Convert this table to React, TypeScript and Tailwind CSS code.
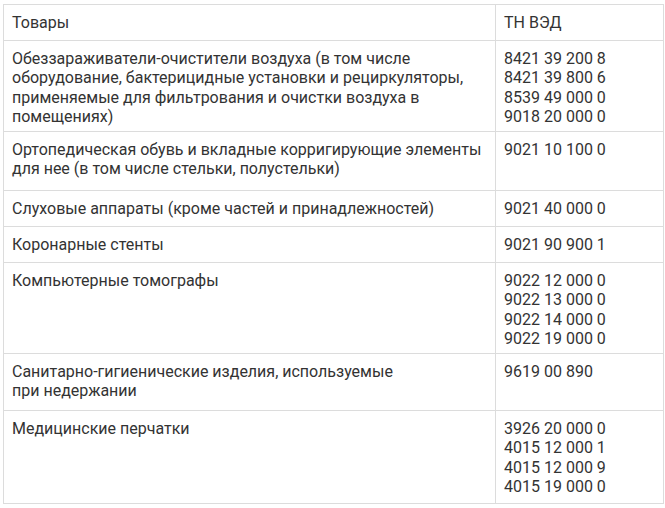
import React from "react";

type Row = { name: string[]; codes: string[]; h: string };

const rows: Row[] = [
  {
    name: [
      "Обеззараживатели-очистители воздуха (в том числе",
      "оборудование, бактерицидные установки и рециркуляторы,",
      "применяемые для фильтрования и очистки воздуха в",
      "помещениях)",
    ],
    codes: ["8421 39 200 8", "8421 39 800 6", "8539 49 000 0", "9018 20 000 0"],
    h: "h-[91px]",
  },
  {
    name: [
      "Ортопедическая обувь и вкладные корригирующие элементы",
      "для нее (в том числе стельки, полустельки)",
    ],
    codes: ["9021 10 100 0"],
    h: "h-[59px]",
  },
  {
    name: ["Слуховые аппараты (кроме частей и принадлежностей)"],
    codes: ["9021 40 000 0"],
    h: "h-[36px]",
  },
  {
    name: ["Коронарные стенты"],
    codes: ["9021 90 900 1"],
    h: "h-[36px]",
  },
  {
    name: ["Компьютерные томографы"],
    codes: ["9022 12 000 0", "9022 13 000 0", "9022 14 000 0", "9022 19 000 0"],
    h: "h-[91px]",
  },
  {
    name: ["Санитарно-гигиенические изделия, используемые", "при недержании"],
    codes: ["9619 00 890"],
    h: "h-[57px]",
  },
  {
    name: ["Медицинские перчатки"],
    codes: ["3926 20 000 0", "4015 12 000 1", "4015 12 000 9", "4015 19 000 0"],
    h: "h-[93px]",
  },
];

const Lines = ({ items }: { items: string[] }) => (
  <>
    {items.map((t, i) => (
      <div key={i} className="whitespace-nowrap">
        {t}
      </div>
    ))}
  </>
);

export default function App() {
  return (
    <div className="w-[665px] h-[508px] bg-white pt-[4px] pl-[3px] font-['Roboto',sans-serif] text-[16px] leading-[19.3px] text-[#333]">
      <table className="w-[660px] border-collapse table-fixed">
        <colgroup>
          <col className="w-[492px]" />
          <col className="w-[168px]" />
        </colgroup>
        <thead>
          <tr className="h-[36px]">
            <th className="border border-[#dcdcdc] align-top text-left font-normal pt-[8px] pl-[8px]">
              Товары
            </th>
            <th className="border border-[#dcdcdc] align-top text-left font-normal pt-[8px] pl-[8px]">
              ТН ВЭД
            </th>
          </tr>
        </thead>
        <tbody>
          {rows.map((r, i) => (
            <tr key={i} className={r.h}>
              <td className="border border-[#dcdcdc] align-top pt-[8px] pl-[8px]">
                <Lines items={r.name} />
              </td>
              <td className="border border-[#dcdcdc] align-top pt-[8px] pl-[8px]">
                <Lines items={r.codes} />
              </td>
            </tr>
          ))}
        </tbody>
      </table>
    </div>
  );
}
